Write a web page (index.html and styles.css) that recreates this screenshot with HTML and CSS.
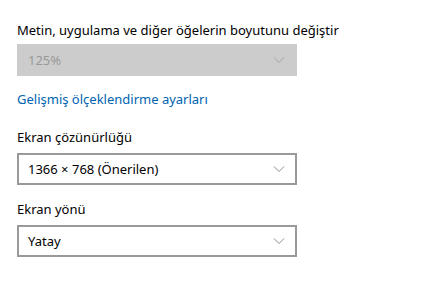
FILE: index.html
```html
<!DOCTYPE html>
<html lang="tr">
<head>
    <meta charset="UTF-8">
    <title>Ekran</title>
    <link rel="stylesheet" href="styles.css">
</head>
<body>
<div id="wrap">
    <p class="label first">Metin, uygulama ve diğer öğelerin boyutunu değiştir</p>
    <div class="combo disabled">
        <span class="value">125%</span>
        <svg class="chev" width="12" height="7" viewBox="0 0 12 7"><path d="M1 0.5 L6 5.5 L11 0.5" fill="none" stroke="currentColor" stroke-width="1"/></svg>
    </div>
    <a class="link" href="#">Gelişmiş ölçeklendirme ayarları</a>

    <p class="label second">Ekran çözünürlüğü</p>
    <div class="combo">
        <span class="value">1366 × 768 (Önerilen)</span>
        <svg class="chev" width="12" height="7" viewBox="0 0 12 7"><path d="M1 0.5 L6 5.5 L11 0.5" fill="none" stroke="currentColor" stroke-width="1"/></svg>
    </div>

    <p class="label third">Ekran yönü</p>
    <div class="combo">
        <span class="value">Yatay</span>
        <svg class="chev" width="12" height="7" viewBox="0 0 12 7"><path d="M1 0.5 L6 5.5 L11 0.5" fill="none" stroke="currentColor" stroke-width="1"/></svg>
    </div>
</div>
</body>
</html>
```

FILE: styles.css
```css
body, p {
    margin: 0;
    padding: 0;
}

body {
    background: #fff;
    font-family: "Noto Sans", "Open Sans", sans-serif;
    font-size: 13px;
    color: #000;
}

#wrap {
    padding: 20px 0 0 17px;
}

.label {
    line-height: 20px;
    height: 20px;
    white-space: nowrap;
}

.second {
    margin-top: 18px;
}

.third {
    margin-top: 14px;
}

.combo {
    box-sizing: border-box;
    width: 280px;
    height: 32px;
    margin-top: 6px;
    border: 2px solid #999;
    display: flex;
    align-items: center;
    justify-content: space-between;
    padding: 0 10px 0 9px;
    color: #000;
}

.first + .combo {
    margin-top: 4px;
}

.combo .chev {
    color: #8a8a8a;
}

.disabled {
    background: #ccc;
    border-color: #ccc;
    color: #999;
}

.disabled .chev {
    color: #a3a3a3;
}

.link {
    display: block;
    margin-top: 13px;
    line-height: 20px;
    color: #0063b1;
    text-decoration: none;
}
```
